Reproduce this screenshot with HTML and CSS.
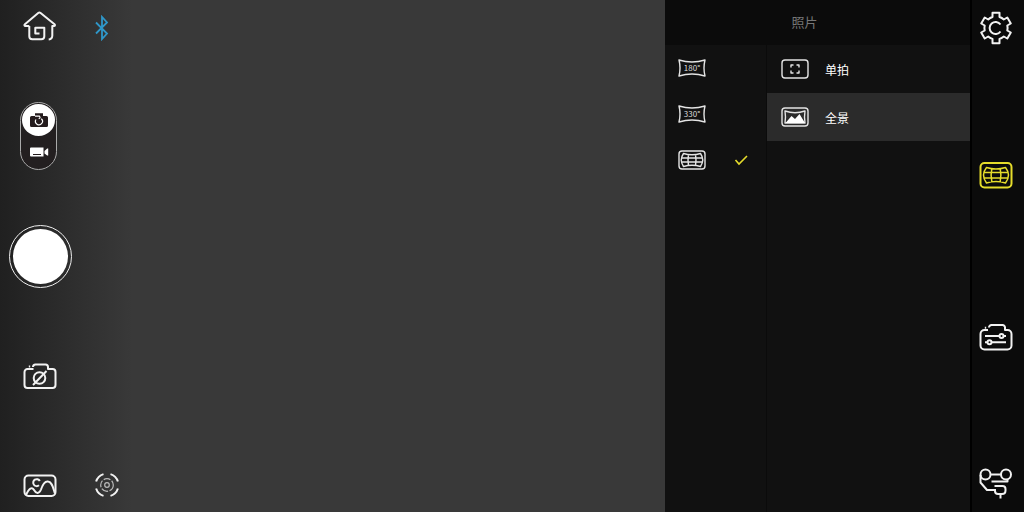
FILE: index.html
```html
<!DOCTYPE html>
<html lang="zh-CN">
<head>
<meta charset="utf-8">
<meta name="viewport" content="width=device-width, initial-scale=1">
<title>照片</title>
<link rel="stylesheet" href="styles.css">
</head>
<body>
<div class="app">
  <main class="viewfinder">
    <nav class="toolbar">
      <button class="icon-btn" aria-label="Home">
        <svg class="icon" width="34" height="32" viewBox="0 0 34 32"><path d="M6.3 16H2.5c-1.2 0-1.4-.9-.6-1.7L15.2 3q1.2-1 2.4 0L31.5 14.3c.8.8.6 1.7-.6 1.7h-1.600v9.500q0 3.600-3.600 4M6.300 16v10.300q0 3 3 3h9q3 0 3-3v-8.600h-9v5.800h4.200"/></svg>
      </button>
      <div class="mode-switch">
        <button class="mode-btn mode-btn-active" aria-label="Photo" aria-pressed="true">
          <svg width="20" height="18" viewBox="0 0 20 18"><path fill="#241b1d" d="M2.500 5H6V2.300h8V5h3.500q1.500 0 1.500 1.500v8q0 1.500-1.500 1.500h-15Q1 16 1 14.500v-8Q1 5 2.500 5z"/><path fill="none" stroke="#fff" stroke-width="1.200" d="M6 5.200h4.400q1.500 2-.7 2.500M7 8.500a3.500 3.500 0 1 0 5.300-.8"/></svg>
        </button>
        <button class="mode-btn" aria-label="Video" aria-pressed="false">
          <svg width="20" height="12" viewBox="0 0 20 12"><path fill="#fff" d="M2 1.500h12.500v9H2q-1 0-1-1v-7q0-1 1-1zM15.500 5l2.700-2.500h1v7h-1L15.500 7.500z"/><path stroke="#241b1d" d="M4 8.500h8"/></svg>
        </button>
      </div>
      <button class="shutter" aria-label="Shutter"></button>
      <button class="icon-btn" aria-label="Camera off">
        <svg class="icon" width="34" height="32" viewBox="0 0 34 32"><path d="M10.500 8h-6a3 3 0 0 0-3 3v13a3 3 0 0 0 3 3h25a3 3 0 0 0 3-3V11a3 3 0 0 0-3-3H25V6a2.500 2.500 0 0 0-2.500-2.500h-10A2.500 2.500 0 0 0 10 6M5.800 5.400h1.400M10 24l13.500-14"/><circle cx="16.500" cy="17" r="5.800"/></svg>
      </button>
      <button class="icon-btn" aria-label="Gallery">
        <svg class="icon" width="34" height="32" viewBox="0 0 34 32"><rect x="1.500" y="5.500" width="31" height="20.500" rx="4"/><path d="M3 25C6 18 9 16.500 11 20c2 3.500 5 4.500 7-.5 2-6 4-8.500 7-8 4.500.5 5.200 7 7 12M16.800 11a3.500 3.500 0 1 0-.8 4.300"/></svg>
      </button>
    </nav>
    <div class="status">
      <svg width="16" height="26" viewBox="0 0 16 26" role="img" aria-label="Bluetooth"><path fill="none" stroke="#2f97c9" stroke-width="1.800" d="M2 7.500l11 11-5 5.500V2l5 5.500L2 18.500"/></svg>
      <button class="icon-btn" aria-label="Focus">
        <svg class="icon" width="26" height="26" viewBox="0 0 26 26"><path d="M2.100 9.500A11.400 11.400 0 0 1 9.500 2.100M16.500 2.100A11.400 11.400 0 0 1 23.900 9.500M23.900 16.500A11.400 11.400 0 0 1 16.500 23.900M9.500 23.900A11.400 11.400 0 0 1 2.100 16.500"/><g stroke="#bbb" stroke-width="1.200"><circle cx="13" cy="13" r="6.300" stroke-dasharray="7 1.500"/><circle cx="13" cy="13" r="2.300"/></g></svg>
      </button>
    </div>
  </main>

  <section class="panel">
    <h1 class="panel-title">照片</h1>
    <div class="panel-body">
      <div class="pano-list">
        <button class="pano-row">
          <svg class="icon thin" width="28" height="20" viewBox="0 0 28 20"><path d="M1 2q13 4 26 0-2 8 0 16-13-4-26 0 2-8 0-16z"/><text class="degree" x="14" y="13" text-anchor="middle">180°</text></svg>
        </button>
        <button class="pano-row">
          <svg class="icon thin" width="28" height="20" viewBox="0 0 28 20"><path d="M1 2q13 4 26 0-2 8 0 16-13-4-26 0 2-8 0-16z"/><text class="degree" x="14" y="13" text-anchor="middle">330°</text></svg>
        </button>
        <button class="pano-row" aria-label="3×3" aria-pressed="true">
          <svg class="icon thin" width="28" height="20" viewBox="0 0 28 20"><rect x="1" y="1" width="26" height="18" rx="3"/><path d="M5.500 3.500q8.500 2.500 17 0 4.500 6.500 0 13-8.500-2.500-17 0-4.500-6.500 0-13zM3.500 8h21M3.500 12h21M10.500 4.500q-1 5.500 0 11M17.500 4.500q1 5.500 0 11"/></svg>
          <svg width="14" height="12" viewBox="0 0 14 12"><path fill="none" stroke="#e5dc2b" stroke-width="1.600" d="M1.500 6l3.500 4 8-8"/></svg>
        </button>
      </div>
      <div class="mode-list">
        <button class="mode-row">
          <svg class="icon thin" width="28" height="20" viewBox="0 0 28 20"><rect x="1" y="1" width="26" height="18" rx="3"/><path d="M10 8.500V6h2.500M15.500 6H18v2.500M18 11.500V14h-2.500M12.500 14H10v-2.500"/></svg>
          单拍
        </button>
        <button class="mode-row mode-row-active" aria-pressed="true">
          <svg class="icon thin" width="28" height="20" viewBox="0 0 28 20"><rect x="1" y="1" width="26" height="18" rx="3"/><path d="M4 4q10 3.500 20 0-1 6 0 12H4q1-6 0-12z"/><path fill="#fff" stroke="none" d="M4.500 16l6-7 3.500 3 4.500-5 5.500 9z"/></svg>
          全景
        </button>
      </div>
    </div>
  </section>

  <nav class="sidebar">
    <button class="icon-btn" aria-label="Settings">
      <svg class="icon" width="34" height="34" viewBox="-17 -17 34 34"><path d="M-3.500-11v-4.200h7V-11Q6-10.200 7.800-8.500l3.500-2 3.500 6-3.500 2q.6 2.500 0 5l3.500 2-3.500 6-3.500-2Q6 10.200 3.500 11v4.200h-7V11Q-6 10.200-7.800 8.500l-3.500 2-3.500-6 3.500-2q-.6-2.500 0-5l-3.500-2 3.500-6 3.500 2Q-6-10.200-3.500-11zM4.500-3.500a6 6 0 1 0 0 7"/></svg>
    </button>
    <button class="icon-btn" aria-label="Panorama" aria-pressed="true">
      <svg class="icon icon-selected" width="34" height="28" viewBox="0 0 34 28"><rect x="1.500" y="2" width="31" height="24.500" rx="4"/><path stroke-width="1.500" d="M7.500 6.500q9.500 3 19 0 6 7.500 0 15.500-9.500-3-19 0-6-8 0-15.500zM4.500 11.500h25M4.500 17h25M12.800 8q-1.500 6.500 0 12.500M21.200 8q1.500 6.500 0 12.500"/></svg>
    </button>
    <button class="icon-btn" aria-label="Camera settings">
      <svg class="icon" width="34" height="30" viewBox="0 0 34 30"><path d="M9 8H5.500a4 4 0 0 0-4 4v11.500a4 4 0 0 0 4 4h23a4 4 0 0 0 4-4V12a4 4 0 0 0-4-4H26V5.500A2.500 2.500 0 0 0 23.500 3h-11A2.500 2.500 0 0 0 10 5.500M5.800 5.800h1.400M6 14h14.500M24.500 14H27M6 20.300h2.500M12.500 20.300H27"/><circle cx="22.500" cy="14" r="2"/><circle cx="10.500" cy="20.300" r="2"/></svg>
    </button>
    <button class="icon-btn" aria-label="Gimbal">
      <svg class="icon" width="34" height="32" viewBox="0 0 34 32"><circle cx="6.500" cy="6.500" r="5"/><circle cx="27" cy="6.500" r="5"/><path d="M11.500 6.500H22M28.500 11.500v2H12.500M1.500 7v7.500l6.500 7.500h9M15.500 18h8q3 0 3 3v1.500q0 3.500-3.500 3.500h-4q-3 0-3-3M21.500 26v4.500"/></svg>
    </button>
  </nav>
</div>
</body>
</html>
```
FILE: styles.css
```css
* {
  box-sizing: border-box;
}

body {
  margin: 0;
  background: #393939;
  color: #fff;
  font-family: "Noto Sans CJK SC", "Noto Sans", sans-serif;
}

button {
  padding: 0;
  border: 0;
  background: none;
  color: inherit;
  font: inherit;
  cursor: pointer;
}

svg {
  display: block;
  flex: none;
}

.app {
  display: flex;
  min-height: 100vh;
}

.icon {
  fill: none;
  stroke: #f2f2f2;
  stroke-width: 2;
  stroke-linejoin: round;
}

.thin {
  stroke: #e4e4e4;
  stroke-width: 1.4;
}

.icon-selected {
  stroke: #e5dc2b;
}

.viewfinder {
  flex: 1;
  display: flex;
  background: linear-gradient(to right, #202020, #393939 132px);
}

.toolbar {
  width: 80px;
  display: grid;
  grid-template-rows: 52px 1fr 74px 1fr 52px;
  place-items: center;
}

.mode-switch {
  width: 37px;
  margin-right: 3px;
  padding: 1px;
  display: flex;
  flex-direction: column;
  align-items: center;
  border: 1px solid #aaa;
  border-radius: 19px;
  background: #231f20;
}

.mode-btn {
  width: 33px;
  height: 32px;
  display: grid;
  place-items: center;
  border-radius: 50%;
}

.mode-btn-active {
  background: #fff;
}

.shutter {
  width: 63px;
  height: 63px;
  padding: 3px;
  border: 1px solid #eee;
  border-radius: 50%;
  background: #fff content-box;
}

.status {
  padding: 15px 14px 14px;
  display: flex;
  flex-direction: column;
  align-items: flex-start;
  justify-content: space-between;
}

.panel {
  width: 305px;
  display: flex;
  flex-direction: column;
  background: #111;
}

.panel-title {
  height: 45px;
  margin: 0;
  padding-right: 26px;
  background: #0b0b0b;
  color: #777;
  font-size: 13px;
  font-weight: 400;
  line-height: 44px;
  text-align: center;
}

.panel-body {
  flex: 1;
  display: flex;
}

.pano-list {
  width: 102px;
  border-right: 1px solid #0b0b0b;
}

.pano-row {
  width: 100%;
  height: 46px;
  padding: 0 18px 0 13px;
  display: flex;
  align-items: center;
  justify-content: space-between;
}

.degree {
  fill: #ddd;
  stroke: none;
  font-family: "Noto Sans CJK SC", sans-serif;
  font-size: 8px;
}

.mode-list {
  flex: 1;
}

.mode-row {
  width: 100%;
  height: 48px;
  padding: 0 14px;
  display: flex;
  align-items: center;
  gap: 16px;
  font-size: 12px;
}

.mode-row-active {
  background: #2b2b2b;
}

.sidebar {
  width: 54px;
  padding: 11px 4px 12px 0;
  display: grid;
  grid-template-rows: 83px 1fr 1fr 82px;
  place-items: center;
  border-left: 2px solid #000;
  background: #0b0b0b;
}

.sidebar .icon-btn:first-child {
  align-self: start;
}

.sidebar .icon-btn:last-child {
  align-self: end;
}
```
